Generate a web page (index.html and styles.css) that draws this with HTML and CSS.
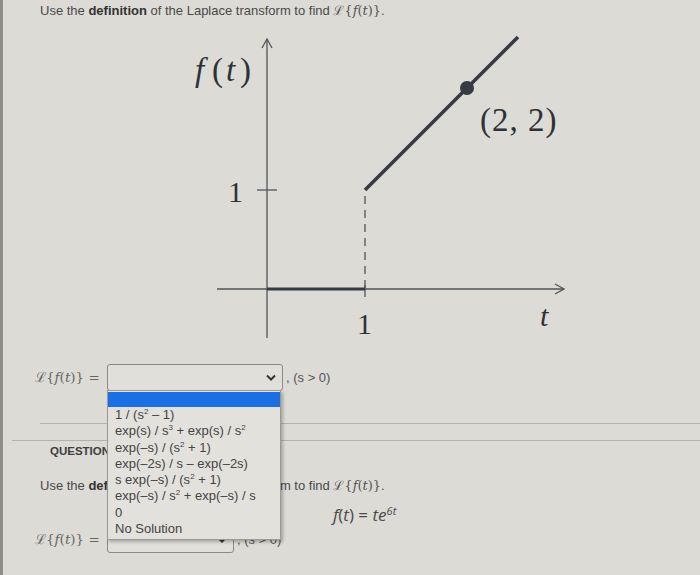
FILE: index.html
```html
<!DOCTYPE html>
<html>
<head>
<meta charset="utf-8">
<title>Laplace transform</title>
<link rel="stylesheet" href="styles.css">
</head>
<body>
<div class="page">
  <p class="prompt">Use the <b>definition</b> of the Laplace transform to find <span class="m">ℒ{<i>f</i>(<i>t</i>)}</span>.</p>

  <svg class="graph" width="400" height="315" viewBox="0 0 400 315">
    <g fill="none" stroke="#50555a" stroke-width="1.3">
      <line x1="87" y1="9" x2="87" y2="308"/>
      <polyline points="82,18 87,9 92,18"/>
      <line x1="37" y1="259" x2="384" y2="259"/>
      <polyline points="375,254 384,259 375,264"/>
      <line x1="77" y1="160" x2="97" y2="160"/>
      <line x1="185" y1="255" x2="185" y2="267"/>
      <line x1="185" y1="166" x2="185" y2="258" stroke-dasharray="8 6"/>
    </g>
    <g stroke="#363b42" stroke-linecap="butt">
      <line x1="87" y1="259" x2="185" y2="259" stroke-width="3"/>
      <line x1="185" y1="160" x2="338" y2="7" stroke-width="3.5"/>
    </g>
    <circle cx="287" cy="58" r="7" fill="#363b42"/>
    <g class="lbl" fill="#2e3238">
      <text x="15" y="51" class="it big">f</text>
      <text x="32" y="51" class="big">(</text>
      <text x="46" y="51" class="it big">t</text>
      <text x="60" y="51" class="big">)</text>
      <text x="48" y="172">1</text>
      <text x="177" y="304">1</text>
      <text x="360" y="296" class="it">t</text>
      <text x="300" y="101" class="big pt">(2, 2)</text>
    </g>
  </svg>

  <div class="answer">
    <span class="lhs m">ℒ{<i>f</i>(<i>t</i>)} =</span>
    <div class="select wide">
      <svg class="chev" width="10" height="7" viewBox="0 0 10 7"><path d="M1 1.5 L5 5.5 L9 1.5" fill="none" stroke="#333" stroke-width="2"/></svg>
    </div>
    <span class="cond">, (s &gt; 0)</span>
  </div>

  <ul class="dropdown">
    <li class="sel"></li>
    <li>1 / (s<sup>2</sup> – 1)</li>
    <li>exp(s) / s<sup>3</sup> + exp(s) / s<sup>2</sup></li>
    <li>exp(–s) / (s<sup>2</sup> + 1)</li>
    <li>exp(–2s) / s – exp(–2s)</li>
    <li>s exp(–s) / (s<sup>2</sup> + 1)</li>
    <li>exp(–s) / s<sup>2</sup> + exp(–s) / s</li>
    <li>0</li>
    <li>No Solution</li>
  </ul>

  <hr class="rule r1">
  <hr class="rule r2">

  <section class="q2">
    <div class="qhead">QUESTION 2</div>
    <p class="prompt p2">Use the <b>definition</b> of the Laplace transform to find <span class="m">ℒ{<i>f</i>(<i>t</i>)}</span>.</p>
    <div class="func"><i>f</i>(<i>t</i>) = <i>te</i><sup><i>6t</i></sup></div>
    <div class="answer a2">
      <span class="lhs m">ℒ{<i>f</i>(<i>t</i>)} =</span>
      <div class="select narrow">
        <svg class="chev" width="10" height="7" viewBox="0 0 10 7"><path d="M1 1.5 L5 5.5 L9 1.5" fill="none" stroke="#333" stroke-width="2"/></svg>
      </div>
      <span class="cond">, (s &gt; 0)</span>
    </div>
  </section>
</div>
</body>
</html>
```

FILE: styles.css
```css
html, body {
  margin: 0;
  padding: 0;
}
body {
  width: 700px;
  height: 575px;
  overflow: hidden;
  background: #dcdbd5;
  font-family: "Liberation Sans", Arial, sans-serif;
  color: #4a4a4a;
}
.page {
  position: relative;
  height: 575px;
  box-sizing: border-box;
  border-left: 3px solid #8e8d88;
}
.prompt {
  margin: 0;
  padding: 2px 0 0 37px;
  font-size: 13px;
  line-height: 18px;
  white-space: nowrap;
}
.prompt b {
  color: #333;
}
.m {
  font-family: "DejaVu Serif", "Liberation Serif", serif;
  font-size: 13px;
  color: #555;
}
.graph {
  display: block;
  margin: 10px 0 0 177px;
}
.lbl text {
  font-family: "Liberation Serif", "DejaVu Serif", serif;
  font-size: 30px;
}
.lbl text.big {
  font-size: 33px;
}
.lbl text.pt {
  letter-spacing: 1px;
}
.lbl text.it {
  font-style: italic;
}
.answer {
  display: flex;
  align-items: center;
  height: 28px;
  margin-top: 18px;
  padding-left: 32px;
}
.lhs {
  width: 72px;
  flex: none;
  font-size: 13.5px;
  color: #666;
}
.select {
  flex: none;
  height: 27px;
  box-sizing: border-box;
  border: 1px solid #8a8a88;
  border-radius: 3px;
  background: #e0dfda;
  display: flex;
  align-items: center;
  justify-content: flex-end;
  padding-right: 6px;
}
.select.wide {
  width: 176px;
}
.select.narrow {
  width: 127px;
}
.cond {
  margin-left: 3px;
  font-size: 13px;
  color: #555;
}
.dropdown {
  position: absolute;
  left: 104px;
  top: 390px;
  width: 174px;
  box-sizing: border-box;
  margin: 0;
  padding: 1px 0 2px;
  list-style: none;
  background: #e2e1dc;
  border: 1px solid #9a9a97;
  box-shadow: 2px 2px 3px rgba(0, 0, 0, 0.25);
  font-size: 13px;
  color: #444;
  z-index: 2;
}
.dropdown li {
  height: 16.3px;
  line-height: 16.3px;
  padding-left: 7px;
  white-space: nowrap;
}
.dropdown li.sel {
  height: 15px;
  background: #1b6fe3;
}
.dropdown sup {
  font-size: 8px;
  line-height: 0;
  vertical-align: 5px;
}
.rule {
  border: 0;
  border-top: 1px solid #b3b2ac;
  height: 0;
  margin: 0;
}
.r1 {
  margin: 32px 0 0 37px;
}
.r2 {
  margin: 16px 0 0 9px;
}
.qhead {
  margin-top: 3px;
  padding-left: 47px;
  font-size: 11.5px;
  line-height: 14px;
  font-weight: bold;
  color: #3e3e3e;
}
.p2 {
  margin-top: 19px;
  padding-top: 0;
}
.func {
  margin-top: 11px;
  padding-left: 330px;
  font-family: "Open Sans", "DejaVu Sans", sans-serif;
  font-size: 17px;
  line-height: 18px;
  color: #4a4a4a;
}
.func sup {
  font-size: 11px;
  vertical-align: 6px;
  line-height: 0;
}
.a2 {
  margin-top: 1px;
}
```
